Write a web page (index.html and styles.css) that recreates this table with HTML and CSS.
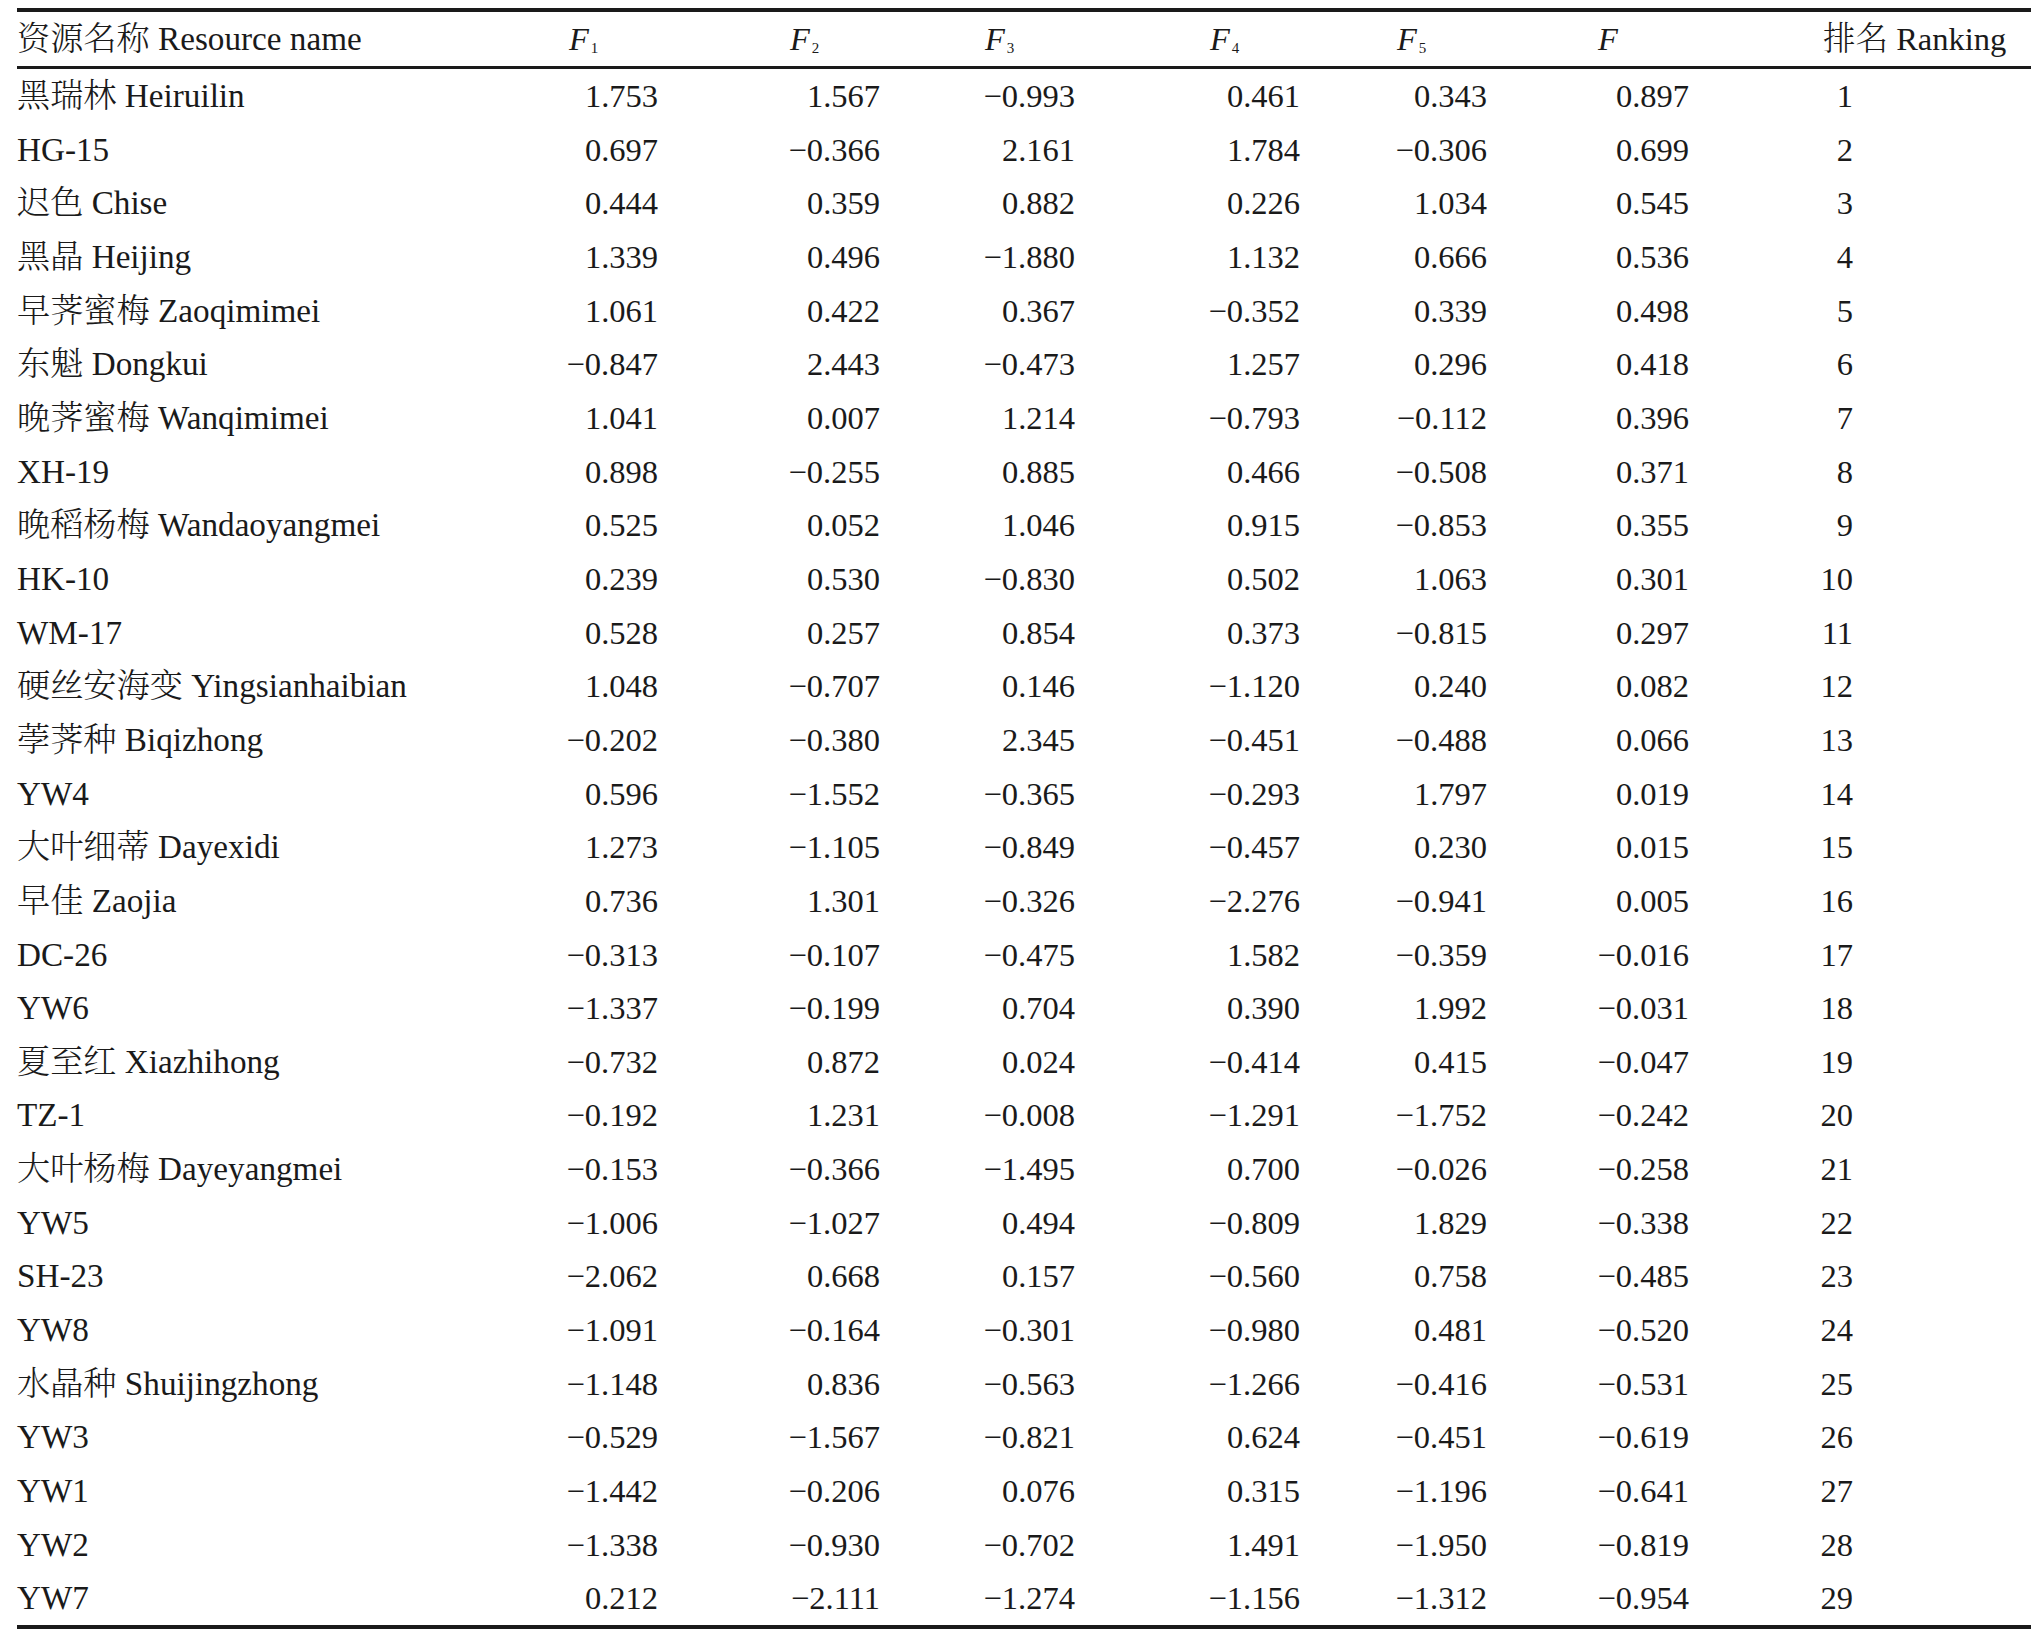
FILE: index.html
```html
<!DOCTYPE html>
<html lang="zh">
<head>
<meta charset="utf-8">
<title>资源综合得分排名</title>
<link rel="stylesheet" href="styles.css">
</head>
<body>
<table class="data">
  <colgroup>
    <col class="c-name">
    <col class="c-f1">
    <col class="c-f2">
    <col class="c-f3">
    <col class="c-f4">
    <col class="c-f5">
    <col class="c-f">
    <col class="c-rank">
  </colgroup>
  <thead>
    <tr>
      <th class="h-name">资源名称 Resource name</th>
      <th class="h-f1"><i>F</i><sub>1</sub></th>
      <th class="h-f2"><i>F</i><sub>2</sub></th>
      <th class="h-f3"><i>F</i><sub>3</sub></th>
      <th class="h-f4"><i>F</i><sub>4</sub></th>
      <th class="h-f5"><i>F</i><sub>5</sub></th>
      <th class="h-f"><i>F</i></th>
      <th class="h-rank">排名 Ranking</th>
    </tr>
  </thead>
  <tbody>
    <tr><td>黑瑞林 Heiruilin</td><td>1.753</td><td>1.567</td><td>−0.993</td><td>0.461</td><td>0.343</td><td>0.897</td><td>1</td></tr>
    <tr><td>HG-15</td><td>0.697</td><td>−0.366</td><td>2.161</td><td>1.784</td><td>−0.306</td><td>0.699</td><td>2</td></tr>
    <tr><td>迟色 Chise</td><td>0.444</td><td>0.359</td><td>0.882</td><td>0.226</td><td>1.034</td><td>0.545</td><td>3</td></tr>
    <tr><td>黑晶 Heijing</td><td>1.339</td><td>0.496</td><td>−1.880</td><td>1.132</td><td>0.666</td><td>0.536</td><td>4</td></tr>
    <tr><td>早荠蜜梅 Zaoqimimei</td><td>1.061</td><td>0.422</td><td>0.367</td><td>−0.352</td><td>0.339</td><td>0.498</td><td>5</td></tr>
    <tr><td>东魁 Dongkui</td><td>−0.847</td><td>2.443</td><td>−0.473</td><td>1.257</td><td>0.296</td><td>0.418</td><td>6</td></tr>
    <tr><td>晚荠蜜梅 Wanqimimei</td><td>1.041</td><td>0.007</td><td>1.214</td><td>−0.793</td><td>−0.112</td><td>0.396</td><td>7</td></tr>
    <tr><td>XH-19</td><td>0.898</td><td>−0.255</td><td>0.885</td><td>0.466</td><td>−0.508</td><td>0.371</td><td>8</td></tr>
    <tr><td>晚稻杨梅 Wandaoyangmei</td><td>0.525</td><td>0.052</td><td>1.046</td><td>0.915</td><td>−0.853</td><td>0.355</td><td>9</td></tr>
    <tr><td>HK-10</td><td>0.239</td><td>0.530</td><td>−0.830</td><td>0.502</td><td>1.063</td><td>0.301</td><td>10</td></tr>
    <tr><td>WM-17</td><td>0.528</td><td>0.257</td><td>0.854</td><td>0.373</td><td>−0.815</td><td>0.297</td><td>11</td></tr>
    <tr><td>硬丝安海变 Yingsianhaibian</td><td>1.048</td><td>−0.707</td><td>0.146</td><td>−1.120</td><td>0.240</td><td>0.082</td><td>12</td></tr>
    <tr><td>荸荠种 Biqizhong</td><td>−0.202</td><td>−0.380</td><td>2.345</td><td>−0.451</td><td>−0.488</td><td>0.066</td><td>13</td></tr>
    <tr><td>YW4</td><td>0.596</td><td>−1.552</td><td>−0.365</td><td>−0.293</td><td>1.797</td><td>0.019</td><td>14</td></tr>
    <tr><td>大叶细蒂 Dayexidi</td><td>1.273</td><td>−1.105</td><td>−0.849</td><td>−0.457</td><td>0.230</td><td>0.015</td><td>15</td></tr>
    <tr><td>早佳 Zaojia</td><td>0.736</td><td>1.301</td><td>−0.326</td><td>−2.276</td><td>−0.941</td><td>0.005</td><td>16</td></tr>
    <tr><td>DC-26</td><td>−0.313</td><td>−0.107</td><td>−0.475</td><td>1.582</td><td>−0.359</td><td>−0.016</td><td>17</td></tr>
    <tr><td>YW6</td><td>−1.337</td><td>−0.199</td><td>0.704</td><td>0.390</td><td>1.992</td><td>−0.031</td><td>18</td></tr>
    <tr><td>夏至红 Xiazhihong</td><td>−0.732</td><td>0.872</td><td>0.024</td><td>−0.414</td><td>0.415</td><td>−0.047</td><td>19</td></tr>
    <tr><td>TZ-1</td><td>−0.192</td><td>1.231</td><td>−0.008</td><td>−1.291</td><td>−1.752</td><td>−0.242</td><td>20</td></tr>
    <tr><td>大叶杨梅 Dayeyangmei</td><td>−0.153</td><td>−0.366</td><td>−1.495</td><td>0.700</td><td>−0.026</td><td>−0.258</td><td>21</td></tr>
    <tr><td>YW5</td><td>−1.006</td><td>−1.027</td><td>0.494</td><td>−0.809</td><td>1.829</td><td>−0.338</td><td>22</td></tr>
    <tr><td>SH-23</td><td>−2.062</td><td>0.668</td><td>0.157</td><td>−0.560</td><td>0.758</td><td>−0.485</td><td>23</td></tr>
    <tr><td>YW8</td><td>−1.091</td><td>−0.164</td><td>−0.301</td><td>−0.980</td><td>0.481</td><td>−0.520</td><td>24</td></tr>
    <tr><td>水晶种 Shuijingzhong</td><td>−1.148</td><td>0.836</td><td>−0.563</td><td>−1.266</td><td>−0.416</td><td>−0.531</td><td>25</td></tr>
    <tr><td>YW3</td><td>−0.529</td><td>−1.567</td><td>−0.821</td><td>0.624</td><td>−0.451</td><td>−0.619</td><td>26</td></tr>
    <tr><td>YW1</td><td>−1.442</td><td>−0.206</td><td>0.076</td><td>0.315</td><td>−1.196</td><td>−0.641</td><td>27</td></tr>
    <tr><td>YW2</td><td>−1.338</td><td>−0.930</td><td>−0.702</td><td>1.491</td><td>−1.950</td><td>−0.819</td><td>28</td></tr>
    <tr><td>YW7</td><td>0.212</td><td>−2.111</td><td>−1.274</td><td>−1.156</td><td>−1.312</td><td>−0.954</td><td>29</td></tr>
  </tbody>
</table>
</body>
</html>
```
FILE: styles.css
```css
html, body {
  margin: 0;
  padding: 0;
  background: #ffffff;
}

body {
  padding: 8px 0 0 17px;
  color: #1a1a1a;
  font-family: "Liberation Serif", "Times New Roman", "Noto Serif CJK SC", "Noto Sans CJK SC", serif;
  font-size: 32.5px;
  font-weight: 300;
}

.data {
  width: 2014px;
  table-layout: fixed;
  border-collapse: separate;
  border-spacing: 0;
  border-top: 4px solid #1a1a1a;
  border-bottom: 4px solid #1a1a1a;
}

.c-name { width: 549px; }
.c-f1 { width: 92px; }
.c-f2 { width: 222px; }
.c-f3 { width: 195px; }
.c-f4 { width: 225px; }
.c-f5 { width: 187px; }
.c-f { width: 202px; }
.c-rank { width: 342px; }

.data th {
  padding: 0;
  line-height: 54px;
  font-weight: 300;
  text-align: left;
  white-space: nowrap;
  border-bottom: 3px solid #1a1a1a;
}

.data th i {
  font-style: italic;
}

.data th sub {
  font-size: 15px;
  vertical-align: -3px;
  line-height: 0;
  margin-left: 2px;
}

.data .h-name,
.data td:first-child {
  font-size: 33.2px;
}

.h-f1 { padding-left: 3px !important; }
.h-f2 { padding-left: 132px !important; }
.h-f3 { padding-left: 105px !important; }
.h-f4 { padding-left: 135px !important; }
.h-f5 { padding-left: 97px !important; }
.h-f { padding-left: 111px !important; }
.h-rank { padding-left: 134px !important; }

.data td {
  padding: 1px 0 0;
  height: 52.65px;
  line-height: 52.65px;
  text-align: right;
  white-space: nowrap;
}

.data td:first-child {
  text-align: left;
}

.data td:last-child {
  padding-right: 178px;
}
```
